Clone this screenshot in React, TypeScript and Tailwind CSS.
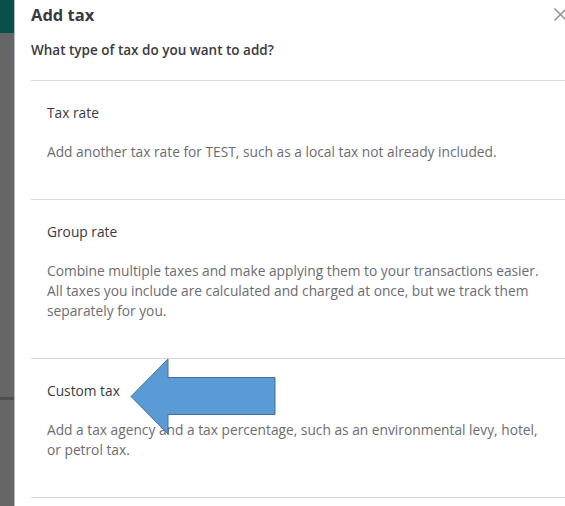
import React from 'react'

const SECTIONS = [
  {
    title: 'Tax rate',
    desc: ['Add another tax rate for TEST, such as a local tax not already included.'],
  },
  {
    title: 'Group rate',
    desc: [
      'Combine multiple taxes and make applying them to your transactions easier.',
      'All taxes you include are calculated and charged at once, but we track them',
      'separately for you.',
    ],
  },
  {
    title: 'Custom tax',
    desc: ['Add a tax agency and a tax percentage, such as an environmental levy, hotel,', 'or petrol tax.'],
  },
]

function Arrow() {
  // callout arrow drawn over the panel
  return (
    <svg className="absolute left-[130px] top-[358px]" width="147" height="77" viewBox="0 0 147 77">
      <polygon
        points="1,38.5 38,1 38,19.5 145,19.5 145,56.5 38,56.5 38,76"
        fill="#5b9bd5"
        stroke="#41719c"
        strokeWidth="1"
      />
    </svg>
  )
}

export default function App() {
  return (
    <div className="relative w-[565px] h-[506px] overflow-hidden flex bg-white" style={{ fontFamily: '"Open Sans", Lato, sans-serif' }}>
      {/* backdrop strip on the left */}
      <div className="w-[14px] flex flex-col flex-shrink-0">
        <div className="h-[33px] bg-[#0a4f4a]" />
        <div className="h-[364px] bg-[#666666]" />
        <div className="h-[3px] bg-[#4f4f4f]" />
        <div className="flex-1 bg-[#666666]" />
      </div>
      <div className="w-px bg-[#b4bfca] flex-shrink-0" />

      <div className="flex-1 pl-[16px]">
        <div className="flex items-start justify-between h-[28px] pt-[3px]">
          <h1 className="text-[16.5px] leading-[24px] font-bold text-[#393a3d]">Add tax</h1>
          <button className="mt-[4px] -mr-[3px] text-[#8d9096]">
            <svg width="15" height="15" viewBox="0 0 15 15">
              <path d="M1.5 1.5 L13.5 13.5 M13.5 1.5 L1.5 13.5" stroke="currentColor" strokeWidth="1.5" />
            </svg>
          </button>
        </div>
        <p className="mt-[12px] text-[13.5px] leading-[20px] font-semibold text-[#393a3d]">
          What type of tax do you want to add?
        </p>

        <div className="mt-[20px]">
          {SECTIONS.map(s => (
            <div key={s.title} className="border-t border-[#d4d7dc] pt-[22px] pb-[37px] pl-[16px]">
              <div className="text-[13.75px] leading-[20px] text-[#393a3d]">{s.title}</div>
              <div className="mt-[19px] text-[13.75px] leading-[20px] text-[#6b6c72]">
                {s.desc.map(line => (
                  <div key={line} className="whitespace-nowrap">{line}</div>
                ))}
              </div>
            </div>
          ))}
          <div className="border-t border-[#d4d7dc]" />
        </div>
      </div>

      <Arrow />
    </div>
  )
}
